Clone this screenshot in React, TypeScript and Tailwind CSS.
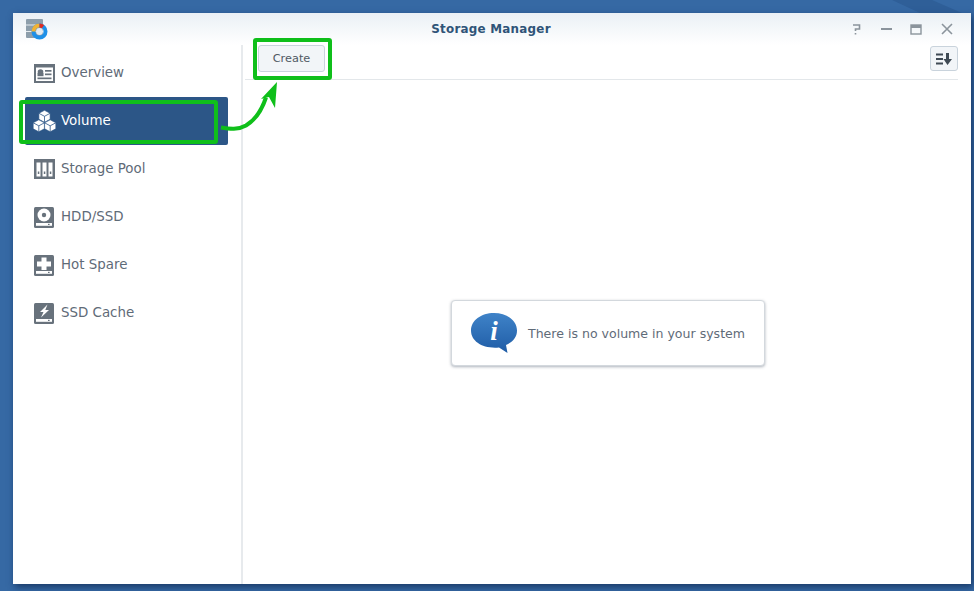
import React from "react";

const F = "[font-family:'DejaVu_Sans',sans-serif]";

function OverviewIcon() {
  return (
    <svg width="21" height="19" viewBox="0 0 21 19">
      <rect width="21" height="19" fill="#68727c" />
      <rect x="2" y="3.500" width="17" height="13.500" fill="#fff" />
      <circle cx="6.500" cy="8" r="2.800" fill="#68727c" />
      <rect x="3.500" y="9" width="6" height="3.200" fill="#68727c" />
      <rect x="11" y="6" width="6.500" height="1.700" fill="#68727c" />
      <rect x="11" y="9.500" width="6.500" height="1.700" fill="#68727c" />
      <rect x="3.500" y="13.500" width="14" height="1.700" fill="#68727c" />
    </svg>
  );
}
function CubesIcon() {
  return (
    <svg width="23" height="22" viewBox="0 0 23 22" fill="#fff" stroke="#2c5687" strokeWidth="0.6">
      <path d="M11.500 0.300l5.600 3v6l-5.600 3-5.600-3v-6z" />
      <path d="M5.800 9.800l5.600 3v6l-5.600 3-5.600-3v-6z" />
      <path d="M17.200 9.800l5.600 3v6l-5.600 3-5.600-3v-6z" />
      <path d="M5.900 3.300l5.600 3 5.600-3M11.500 6.300v6M.2 12.800l5.600 3 5.600-3M5.800 15.800v6M11.600 12.800l5.600 3 5.600-3M17.200 15.800v6" fill="none" strokeWidth="0.8" />
    </svg>
  );
}
function PoolIcon() {
  return (
    <svg width="21" height="20" viewBox="0 0 21 20">
      <rect width="21" height="20" fill="#68727c" />
      <rect x="2.500" y="3.500" width="4" height="14" fill="#fff" />
      <rect x="8.500" y="3.500" width="4" height="14" fill="#fff" />
      <rect x="14.500" y="3.500" width="4" height="14" fill="#fff" />
      <rect x="3.800" y="12.500" width="1.500" height="2.500" fill="#68727c" />
      <rect x="9.800" y="12.500" width="1.500" height="2.500" fill="#68727c" />
      <rect x="15.800" y="12.500" width="1.500" height="2.500" fill="#68727c" />
    </svg>
  );
}
function DriveBase({ children }: { children: React.ReactNode }) {
  return (
    <svg width="20" height="21" viewBox="0 0 20 21">
      <rect width="20" height="21" rx="1.500" fill="#68727c" />
      {children}
      <rect x="2" y="16" width="16" height="2.800" fill="#fff" />
      <rect x="14" y="16.800" width="1.600" height="1.200" fill="#68727c" />
    </svg>
  );
}

const rows = [
  { label: "Overview", icon: <OverviewIcon /> },
  { label: "Volume", icon: <CubesIcon />, active: true },
  { label: "Storage Pool", icon: <PoolIcon /> },
  {
    label: "HDD/SSD",
    icon: (
      <DriveBase>
        <circle cx="10" cy="8" r="6.500" fill="#fff" />
        <circle cx="10" cy="8" r="2.200" fill="#68727c" />
      </DriveBase>
    ),
  },
  {
    label: "Hot Spare",
    icon: (
      <DriveBase>
        <path d="M7.500 2.500h5v4h4.500v5h-4.500v3.500h-5v-3.500H3v-5h4.500z" fill="#fff" />
      </DriveBase>
    ),
  },
  {
    label: "SSD Cache",
    icon: (
      <DriveBase>
        <path d="M13.500 1.500L6 9h3.500L7 14.500 15 7h-3.700z" fill="#fff" />
      </DriveBase>
    ),
  },
];

export default function App() {
  return (
    <div className={`relative w-[974px] h-[591px] overflow-hidden bg-[#3669a4] ${F}`}>
      <svg className="absolute left-[880px] top-0" width="94" height="40" viewBox="0 0 94 40">
        <path d="M12 0h40l30 13H40z" fill="#2f5f98" />
      </svg>
      <div className="absolute left-[13px] top-[13px] w-[958px] h-[571px] bg-white flex flex-col shadow-[2px_3px_7px_rgba(15,40,80,0.75)]">
        <div className="h-[32px] shrink-0 relative flex items-center justify-center bg-gradient-to-b from-[#eaf0f5] to-[#ffffff]">
          <svg className="absolute left-[12px] top-[5px]" width="24" height="23" viewBox="0 0 24 23">
            <rect x="1" y="1" width="17" height="19" rx="1" fill="#8d9eab" />
            <path d="M1 7h17M1 13.500h17" stroke="#e6ecf0" strokeWidth="1" />
            <circle cx="14.500" cy="13.500" r="6" fill="none" stroke="#1e90e8" strokeWidth="4" />
            <path d="M8.500 13.500a6 6 0 0 1 6-6" fill="none" stroke="#f2b233" strokeWidth="4" />
            <path d="M14.500 7.500a6 6 0 0 1 3.500 1.200" fill="none" stroke="#e02b20" strokeWidth="4" />
            <circle cx="14.500" cy="13.500" r="3.400" fill="#e4eaef" />
          </svg>
          <span className="text-[11.900px] font-bold text-[#2f5478] tracking-[0.25px] mt-[2px] -ml-[2px]">Storage Manager</span>
          <div className="absolute right-0 top-0 h-full">
            <svg width="118" height="32" viewBox="0 0 118 32" fill="none" stroke="#8b949c" strokeWidth="1.600">
              <path d="M-1.500 12h8v4h-4v2M2.500 20v1.600" />
              <path d="M28 16h11" strokeWidth="2" />
              <rect x="58" y="12" width="10" height="9" strokeWidth="1.400" />
              <path d="M58 13.500h10" strokeWidth="3" />
              <path d="M89 11l10 10M99 11l-10 10" />
            </svg>
          </div>
        </div>
        <div className="flex-1 flex min-h-0">
          <aside className="w-[230px] shrink-0 border-r-2 border-[#e7eaed] pl-[12px] pr-[13px] pt-[4px]">
            {rows.map((r) => (
              <div
                key={r.label}
                className={`h-[48px] flex items-center rounded-[2px] pl-[9px] ${r.active ? "bg-[#2c5687] text-white" : "text-[#5f6b78]"}`}
              >
                <div className={`w-[27px] flex justify-start ${r.active ? "-ml-[1px]" : ""}`}>{r.icon}</div>
                <span className={`text-[13.400px] leading-none ${r.active ? "ml-[1px]" : ""}`}>{r.label}</span>
              </div>
            ))}
          </aside>
          <main className="flex-1 flex flex-col min-w-0">
            <div className="h-[35px] shrink-0 ml-[2px] mr-[13px] border-b border-[#e3e7ea] flex items-start justify-between pl-[13px]">
              <button className="w-[67px] h-[27px] pt-[2px] rounded-[3px] border border-[#c9d3dc] bg-[#f2f5f8] text-[11.300px] text-[#505a64]">Create</button>
              <button className="w-[28px] h-[25px] mt-[1px] rounded-[3px] border border-[#c9d3dc] bg-[#f2f5f8] flex items-center justify-center">
                <svg width="16" height="12" viewBox="0 0 16 12" fill="#3f4a54">
                  <rect y="0.500" width="7" height="2" />
                  <rect y="5" width="7" height="2" />
                  <rect y="9.500" width="7" height="2" />
                  <path d="M10 0h3v6h3l-4.500 6L7.500 6H10z" />
                </svg>
              </button>
            </div>
            <div className="flex-1 flex items-start justify-center pt-[220px] pl-[2px]">
              <div className="w-[314px] h-[66px] rounded-[4px] bg-white border border-[#d3d8dd] shadow-[0_1px_3px_rgba(70,85,105,0.45)] flex items-center pl-[18px]">
                <svg width="48" height="42" viewBox="0 0 48 42">
                  <defs>
                    <linearGradient id="b" x1="0" y1="0" x2="0" y2="1">
                      <stop offset="0" stopColor="#3f83c8" />
                      <stop offset="1" stopColor="#1f5ca6" />
                    </linearGradient>
                  </defs>
                  <path d="M24 1c13 0 23 7.500 23 17.500 0 6.500-4 11.500-11 14.500l1.500 8-8.500-5.500C13 37 1 29.500 1 18.500 1 8.500 11 1 24 1z" fill="url(#b)" />
                  <text x="24" y="28" textAnchor="middle" fontFamily="'Liberation Serif',serif" fontStyle="italic" fontWeight="700" fontSize="27" fill="#fff">i</text>
                </svg>
                <span className="ml-[10px] mt-[3px] text-[12.550px] text-[#5f6b78] whitespace-nowrap">There is no volume in your system</span>
              </div>
            </div>
          </main>
        </div>
      </div>
      {/* annotations */}
      <div className="absolute left-[19px] top-[100px] w-[199px] h-[44px] rounded-[3px] border-[4px] border-[#0fbf1a]" />
      <div className="absolute left-[253px] top-[38px] w-[79px] h-[42px] rounded-[3px] border-[4px] border-[#0fbf1a]" />
      <svg className="absolute left-[218px] top-[78px]" width="62" height="56" viewBox="0 0 62 56" fill="#0fbf1a">
        <path d="M3 49.500c9 1.500 17 2.500 25-2 10-6 16-16 20-28" fill="none" stroke="#0fbf1a" strokeWidth="4" />
        <path d="M59 4L43 21l8-2 6 11z" />
      </svg>
    </div>
  );
}
